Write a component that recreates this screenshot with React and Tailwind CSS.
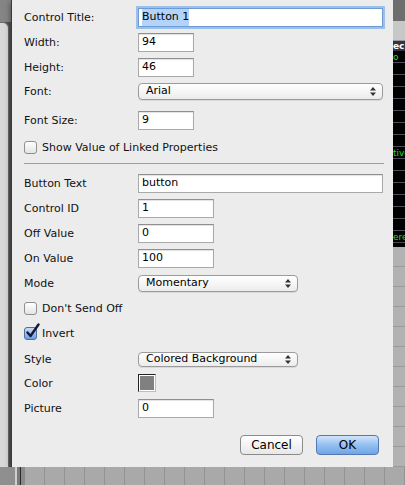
import React from 'react';

const Arrows = () => (
  <svg width="6" height="9" viewBox="0 0 6 9" className="shrink-0">
    <path d="M3 0 L6 3.5 L0 3.5 Z" fill="#333" />
    <path d="M3 9 L6 5.5 L0 5.5 Z" fill="#333" />
  </svg>
);

const Label = ({ children }) => (
  <div className="w-[114px] shrink-0 text-[11px] text-[#111] leading-none">{children}</div>
);

const Field = ({ w, children, focus }) => (
  <div
    className={`h-[19px] ${w} flex items-center px-[3px] bg-white text-[11px] text-black border ${
      focus
        ? 'border-[#6d9bd6] shadow-[0_0_0_2px_#9cc0ea]'
        : 'border-[#a9a9a9] border-t-[#8f8f8f] shadow-[inset_0_1px_1px_rgba(0,0,0,0.12)]'
    }`}
  >
    {children}
  </div>
);

const Select = ({ w, value, h = 'h-[17px]' }) => (
  <div className={`${h} ${w} flex items-center justify-between pl-[7px] pr-[6px] rounded-[4px] border border-[#9b9b9b] bg-gradient-to-b from-white to-[#ececec] shadow-[0_1px_0_rgba(0,0,0,0.08)] text-[11px] text-black`}>
    <span>{value}</span>
    <Arrows />
  </div>
);

const Check = ({ checked, label }) => (
  <div className="flex items-center h-[13px] gap-[4px]">
    <div className="relative w-[14px] h-[13px]">
      <div
        className={`w-[13px] h-[13px] rounded-[3px] border ${
          checked
            ? 'border-[#4f6f9c] bg-gradient-to-b from-[#c9dcf3] to-[#6aa0e3]'
            : 'border-[#8f8f8f] bg-gradient-to-b from-white to-[#e4e4e4]'
        }`}
      />
      {checked && (
        <svg width="16" height="16" viewBox="0 0 16 16" className="absolute left-[1px] top-[-4px]">
          <path d="M2.5 9.5 L5.5 13 L13.5 1.5" fill="none" stroke="#15183a" strokeWidth="2.4" strokeLinecap="round" strokeLinejoin="round" />
        </svg>
      )}
    </div>
    <span className="text-[11px] text-[#111] leading-none">{label}</span>
  </div>
);

const Row = ({ mt, children }) => (
  <div className={`flex items-center ${mt}`}>{children}</div>
);

const gridLines = [0, 20, 40, 60, 80, 100, 120, 140, 160, 180, 200, 220, 240, 260, 280, 300, 320, 340, 360, 380];
const darkLines = [0, 1, 2, 3, 4, 5, 6, 7, 8, 9, 10, 11, 12, 13, 14, 15];

export default function App() {
  return (
    <div className="w-[405px] h-[485px] flex flex-col overflow-hidden bg-[#a8a8a8] font-['DejaVu_Sans',sans-serif]">
      <div className="flex h-[467px]">
        {/* left backdrop */}
        <div className="w-[11px] flex flex-col bg-[#555]">
          <div className="h-[22px] bg-[#858585]" />
          <div className="flex-1 w-[9px] bg-[#d8d8d8] rounded-tr-[6px] border-t border-r border-[#6a6a6a]" />
        </div>

        {/* dialog sheet */}
        <div className="w-[382px] bg-[#ececec] flex flex-col pl-[12px] pr-[10px] pt-[8px] border-l border-[#3a3a3a] shadow-[0_2px_6px_rgba(0,0,0,0.5)]">
          <Row mt="mt-0">
            <Label>Control Title:</Label>
            <Field w="flex-1" focus>
              <span className="bg-[#b4d3f8]">Button 1</span>
            </Field>
          </Row>
          <Row mt="mt-[6px]">
            <Label>Width:</Label>
            <Field w="w-[56px]">94</Field>
          </Row>
          <Row mt="mt-[6px]">
            <Label>Height:</Label>
            <Field w="w-[56px]">46</Field>
          </Row>
          <Row mt="mt-[6px]">
            <Label>Font:</Label>
            <Select w="flex-1" value="Arial" />
          </Row>
          <Row mt="mt-[11px]">
            <Label>Font Size:</Label>
            <Field w="w-[56px]">9</Field>
          </Row>
          <div className="mt-[11px]">
            <Check label="Show Value of Linked Properties" />
          </div>
          <div className="mt-[9px] h-px bg-[#9e9e9e] mr-[-1px]" />
          <Row mt="mt-[10px]">
            <Label>Button Text</Label>
            <Field w="flex-1">button</Field>
          </Row>
          <Row mt="mt-[6px]">
            <Label>Control ID</Label>
            <Field w="w-[76px]">1</Field>
          </Row>
          <Row mt="mt-[6px]">
            <Label>Off Value</Label>
            <Field w="w-[76px]">0</Field>
          </Row>
          <Row mt="mt-[6px]">
            <Label>On Value</Label>
            <Field w="w-[76px]">100</Field>
          </Row>
          <Row mt="mt-[7px]">
            <Label>Mode</Label>
            <Select w="w-[160px]" value="Momentary" />
          </Row>
          <div className="mt-[10px]">
            <Check label="Don't Send Off" />
          </div>
          <div className="mt-[12px]">
            <Check checked label="Invert" />
          </div>
          <Row mt="mt-[12px]">
            <Label>Style</Label>
            <Select w="w-[160px]" h="h-[15px]" value="Colored Background" />
          </Row>
          <Row mt="mt-[7px]">
            <Label>Color</Label>
            <div className="w-[18px] h-[18px] border border-[#222] border-r-[#bdbdbd] border-b-[#bdbdbd] bg-white p-px">
              <div className="w-full h-full bg-[#808080]" />
            </div>
          </Row>
          <Row mt="mt-[7px]">
            <Label>Picture</Label>
            <Field w="w-[76px]">0</Field>
          </Row>
          <div className="mt-[17px] flex justify-end gap-[13px] pr-[4px]">
            <button className="w-[63px] h-[20px] rounded-[4px] border border-[#8a8a8a] bg-gradient-to-b from-white to-[#e8e8e8] text-[12px] text-black leading-none">
              Cancel
            </button>
            <button className="w-[63px] h-[20px] rounded-[4px] border border-[#5479b0] bg-gradient-to-b from-[#d3e5fa] via-[#94bff0] to-[#6ea5e8] text-[12px] text-black leading-none">
              OK
            </button>
          </div>
        </div>

        {/* right backdrop */}
        <div className="w-[12px] flex flex-col overflow-hidden">
          <div className="h-[22px] bg-[#6e6e6e]" />
          <div className="h-[20px] bg-[#c8c8c8] border-b border-[#9a9a9a]" />
          <div className="h-[10px] bg-[#33333f] text-[9px] text-white font-bold leading-[10px] whitespace-nowrap">ec</div>
          <div className="h-[196px] bg-black flex flex-col text-[9px] leading-[12px] text-[#22dd22] whitespace-nowrap">
            <div className="h-[12px] border-b border-[#4c4c5a]">o</div>
            {darkLines.map((i) => (
              <div key={i} className="h-[12px] shrink-0 border-b border-[#4c4c5a]">
                {i === 7 ? 'tive' : i === 14 ? 'ere' : ''}
              </div>
            ))}
          </div>
          <div className="flex-1 bg-[#b2b2b2] flex flex-col">
            {gridLines.slice(0, 11).map((y) => (
              <div key={y} className="h-[20px] shrink-0 border-b border-[#9a9a9a]" />
            ))}
          </div>
        </div>
      </div>

      {/* bottom backdrop */}
      <div className="flex-1 flex bg-[#a9a9a9]">
        <div className="w-[20px] bg-[#8f8f8f]" />
        <div className="w-[2px] bg-[#cfcfcf]" />
        <div className="w-[4px] bg-[#7a7a7a]" />
        <div className="w-[2px] bg-[#2a2a2a]" />
        <div className="w-[5px] bg-[#8a8a8a]" />
        {gridLines.slice(0, 19).map((x) => (
          <div key={x} className="w-[20px] shrink-0 border-r border-[#939393]" />
        ))}
      </div>
    </div>
  );
}
